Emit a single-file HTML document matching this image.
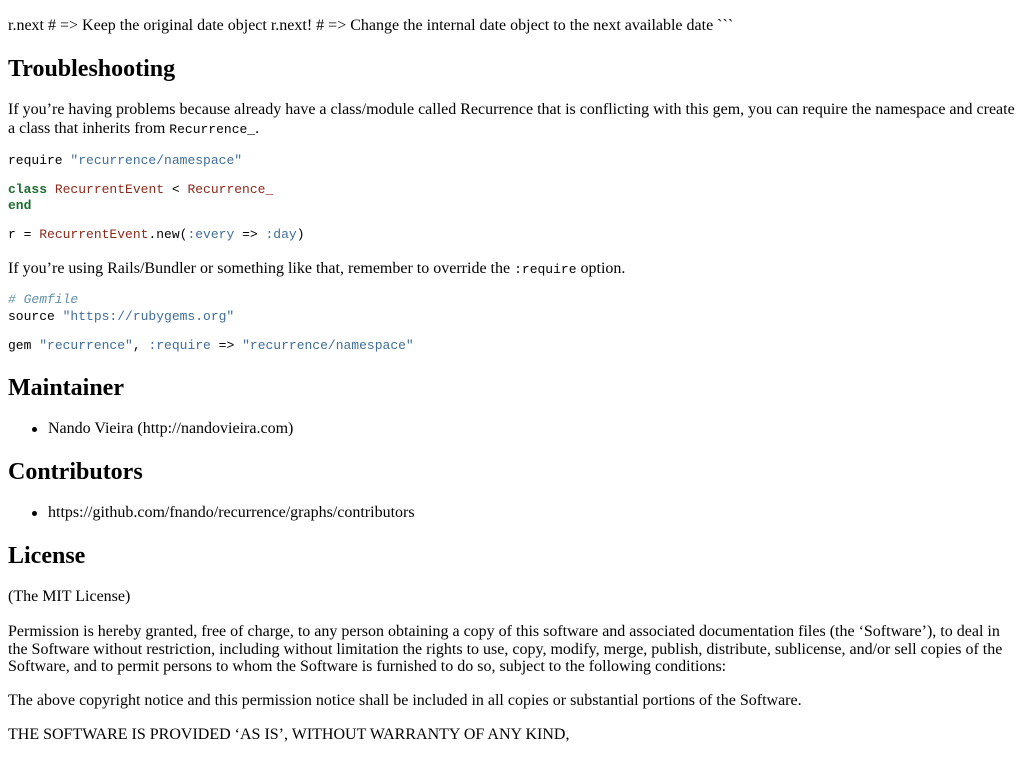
<!DOCTYPE html>
<html><head><meta charset="utf-8"><style>
body{margin:0;background:#fff;color:#000;font-family:"Liberation Serif",serif;font-size:16px;}
#w{position:relative;top:2px;}
.l{position:absolute;left:8px;white-space:nowrap;line-height:18px;}
.c{position:absolute;left:8px;white-space:pre;font-family:"Liberation Mono",monospace;font-size:13px;line-height:16px;}
.h{position:absolute;left:8px;white-space:nowrap;font-size:24px;font-weight:bold;line-height:28px;}
code{font-family:"Liberation Mono",monospace;font-size:13px;}
.k{color:#1e6b2e;font-weight:bold}.n{color:#8b2a1a}.s{color:#3f6e9a}.m{color:#5f8fa8;font-style:italic}
.li{position:absolute;left:48px;white-space:nowrap;line-height:18px;}
.li:before{content:"";position:absolute;left:-16px;top:7px;width:5px;height:5px;border-radius:50%;background:#000;}
</style></head><body><div id="w">
<div class="l" style="top:15px">r.next # =&gt; Keep the original date object r.next! # =&gt; Change the internal date object to the next available date &#96;&#96;&#96;</div>
<div class="h" style="top:53px">Troubleshooting</div>
<div class="l" style="top:99px">If you’re having problems because already have a class/module called Recurrence that is conflicting with this gem, you can require the namespace and create</div>
<div class="l" style="top:118px">a class that inherits from <code>Recurrence_</code>.</div>
<div class="c" style="top:151px">require <span class="s">"recurrence/namespace"</span></div>
<div class="c" style="top:180px"><span class="k">class</span> <span class="n">RecurrentEvent</span> &lt; <span class="n">Recurrence_</span></div>
<div class="c" style="top:196px"><span class="k">end</span></div>
<div class="c" style="top:225px">r = <span class="n">RecurrentEvent</span>.new(<span class="s">:every</span> =&gt; <span class="s">:day</span>)</div>
<div class="l" style="top:258px">If you’re using Rails/Bundler or something like that, remember to override the <code>:require</code> option.</div>
<div class="c" style="top:290px"><span class="m"># Gemfile</span></div>
<div class="c" style="top:307px">source <span class="s">"https://rubygems.org"</span></div>
<div class="c" style="top:336px">gem <span class="s">"recurrence"</span>, <span class="s">:require</span> =&gt; <span class="s">"recurrence/namespace"</span></div>
<div class="h" style="top:372px">Maintainer</div>
<div class="li" style="top:418px">Nando Vieira (http://nandovieira.com)</div>
<div class="h" style="top:456px">Contributors</div>
<div class="li" style="top:502px">https://github.com/fnando/recurrence/graphs/contributors</div>
<div class="h" style="top:540px">License</div>
<div class="l" style="top:586px">(The MIT License)</div>
<div class="l" style="top:621px">Permission is hereby granted, free of charge, to any person obtaining a copy of this software and associated documentation files (the ‘Software’), to deal in</div>
<div class="l" style="top:639px">the Software without restriction, including without limitation the rights to use, copy, modify, merge, publish, distribute, sublicense, and/or sell copies of the</div>
<div class="l" style="top:656px">Software, and to permit persons to whom the Software is furnished to do so, subject to the following conditions:</div>
<div class="l" style="top:690px">The above copyright notice and this permission notice shall be included in all copies or substantial portions of the Software.</div>
<div class="l" style="top:724px">THE SOFTWARE IS PROVIDED ‘AS IS’, WITHOUT WARRANTY OF ANY KIND,</div>
</div></body></html>
